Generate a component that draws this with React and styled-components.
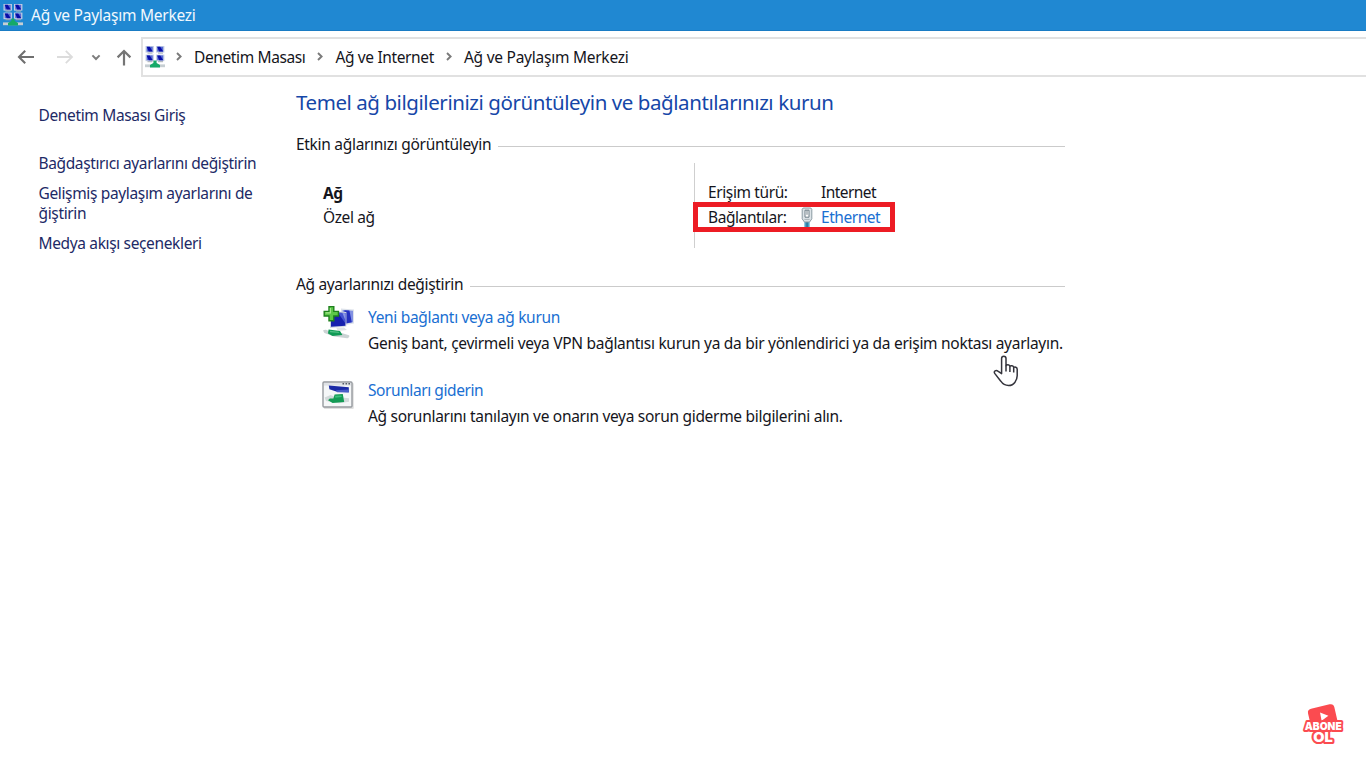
import React from 'react';
import styled, { createGlobalStyle } from 'styled-components';

const crumbs = [
    { label: 'Denetim Masası', tight: 0.38 },
    { label: 'Ağ ve Internet', tight: 0.37 },
    { label: 'Ağ ve Paylaşım Merkezi', tight: 0.25 },
];

const sideLinks = [
    { lines: ['Bağdaştırıcı ayarlarını değiştirin'], tight: 0.38 },
    { lines: ['Gelişmiş paylaşım ayarlarını de', 'ğiştirin'], tight: 0.35 },
    { lines: ['Medya akışı seçenekleri'], tight: 0.36 },
];

function NetworkIcon() {
    return (
        <svg width='20' height='22' viewBox='0 0 20 22'>
            {[[0.5, 0], [11, 0], [0.5, 8.6], [11, 8.6]].map(([x, y]) => (
                <g key={`${x}-${y}`} transform={`translate(${x} ${y})`}>
                    <rect width='8.4' height='6.6' fill='#c6d0e4' />
                    <rect x='1.2' y='0.8' width='6' height='4.8' fill='#5468d4' />
                    <path d='M1.2 0.8h3l3 4.8h-4z' fill='#070ca6' />
                    <rect x='2' y='6.6' width='5' height='1' fill='#a3abb5' />
                </g>
            ))}
            <rect y='18.4' width='20' height='2.8' fill='#c6ced2' />
            <path d='M8.4 14.6h3.2v2.4l3.4 2v2.4H5V19l3.4-2z' fill='#15a968' />
        </svg>
    );
}

function BackIcon() {
    return (
        <svg width='18' height='16' viewBox='0 0 18 16' fill='none' stroke='currentColor' strokeWidth='2.1'>
            <path d='M17 8H2M8.2 1.8L2 8l6.2 6.2' />
        </svg>
    );
}

function ForwardIcon() {
    return (
        <svg width='18' height='16' viewBox='0 0 18 16' fill='none' stroke='currentColor' strokeWidth='1.8'>
            <path d='M1 8h15M9.8 1.8L16 8l-6.2 6.2' />
        </svg>
    );
}

function DownIcon() {
    return (
        <svg width='10' height='7' viewBox='0 0 10 7' fill='none' stroke='currentColor' strokeWidth='2'>
            <path d='M1.4 1.4L5 5l3.6-3.6' />
        </svg>
    );
}

function UpIcon() {
    return (
        <svg width='16' height='17' viewBox='0 0 16 17' fill='none' stroke='currentColor' strokeWidth='2.2'>
            <path d='M8 16.5V2M1.6 8.4L8 2l6.4 6.4' />
        </svg>
    );
}

function CrumbArrow() {
    return (
        <svg width='6' height='9' viewBox='0 0 6 9' fill='none' stroke='#7a7a7a' strokeWidth='1.9'>
            <path d='M1 1l3.6 3.5L1 8' />
        </svg>
    );
}

function PlugIcon() {
    return (
        <svg width='12' height='20' viewBox='0 0 12 20'>
            <path d='M3.4 15h5.2v5H3.4z' fill='#4aa3c8' />
            <path d='M5.5 15h1.1v5H5.5z' fill='#1f6388' />
            <path d='M2.2 1h7.6l1 1.4v9.4L8.6 15H3.4L1.2 11.8V2.4z' fill='#dde4e8' stroke='#8b9aa3' />
            <path d='M4 3.2h4v7H4z' fill='#fff' stroke='#6f7f88' />
            <path d='M6 3.4v4.4' stroke='#6f7f88' />
            <path d='M3.4 12.4h5.2' stroke='#a9b4b9' />
        </svg>
    );
}

function NewConnectionIcon() {
    return (
        <svg width='34' height='36' viewBox='0 0 34 36'>
            <path d='M19 3.6l13 .8v14.2L19 21z' fill='#dde2ea' />
            <path d='M20.6 5l10.4.8v11.4l-10.4 2z' fill='#8190e2' />
            <path d='M22.4 5.2l5 .3 2.4 11.8-7.4 1.4z' fill='#2430bf' />
            <path d='M8 6l16.4 1V21.6L8 23z' fill='#d0d7e2' />
            <path d='M9 7.2l14.4.9v12.6L9 21.8z' fill='#1620ae' />
            <path d='M16 7.7l7.4.4v10.4z' fill='#4453d0' />
            <path d='M20.4 8l3 .2v7z' fill='#8b98e8' />
            <path d='M14 22.6h8l3 2.4-9 1z' fill='#dfe3e5' />
            <path d='M1 25.6c2-1.4 4-.6 5.6.6l11.4 1.4 9 2.6c1 1-.4 3-2 3L12 31.4 2.4 28z' fill='#cbd3d4' />
            <path d='M6.6 24.6l11.4 1.4 2.4 4-9.8 1L6 28.6z' fill='#109a55' />
            <path d='M8 25.8l8.4 1 1 1.2L8 27.2z' fill='#4fc084' />
            <path d='M7 1.6h4.8v4.8h4.6v4.6h-4.6v4.8H7V11H2.2V6.4H7z' fill='#5cc848' stroke='#1e801d' strokeWidth='1.4' />
            <path d='M8.4 3v4.8H3.6' fill='none' stroke='#a5e58c' strokeWidth='1.2' />
        </svg>
    );
}

function TroubleshootIcon() {
    return (
        <svg width='32' height='28' viewBox='0 0 32 28'>
            <rect x='1.8' y='2' width='30' height='26' rx='1' fill='#e0e0e0' />
            <rect x='1' y='1' width='29' height='25' rx='1' fill='#f5f7f8' stroke='#969a9f' strokeWidth='1.4' />
            <path d='M2 2h27v2.6H2z' fill='#dfe2e6' />
            <path d='M20.5 2.8h1.6M23.5 2.8h1.6M26.4 2.8H28' stroke='#555b66' strokeWidth='1.4' />
            <path d='M6.8 4.4l20 1.8v5L15 10.8 7.4 8.2z' fill='#1a2aa6' />
            <path d='M14 9.2l12.8-.8v3L15 11.2z' fill='#4a5cc8' />
            <path d='M2.6 16.5l6-2.4 4 1.6 14.4 1.6v3.4l-10 1.6L4 20z' fill='#d3dadb' />
            <path d='M20.8 13l1.4 8-11.6 1-4.6-2.8 1.8-1.6h3.6l1.2-4z' fill='#149b55' />
            <path d='M13 14.8l6.4-.4.4 1.6-6.4.8z' fill='#3cc07c' />
        </svg>
    );
}

function HandCursor() {
    return (
        <svg width='26' height='34' viewBox='0 0 26 34'>
            <path
                d='M8.6 19.6V4.6c0-3.2 4.4-3.2 4.4 0v7.2c.6-1.6 3.6-1.4 3.9.6.8-1.2 3.5-.9 3.8 1 1-.8 3.5-.4 3.5 1.8v6.6c0 2.6-1 4.4-2.2 6.4-1.4 2-3.6 3.3-6.4 3.3-3.8 0-6-1.6-7.8-4.3L1.7 19.4c-1.3-2.2 1.3-3.9 3.2-2.3z'
                fill='#fff'
                stroke='#34343c'
                strokeWidth='1.5'
                strokeLinejoin='round'
            />
            <path d='M13 11.6v6M16.9 12.6v5.4M20.7 13.6v4.8' stroke='#34343c' strokeWidth='1.5' fill='none' />
        </svg>
    );
}

function SubscribeLogo() {
    return (
        <svg width='44' height='46' viewBox='0 0 44 46' overflow='visible'>
            <rect x='7.6' y='3.2' width='27' height='24' rx='4' fill='#fb4b50' transform='rotate(-13 21 15.6)' />
            <path d='M18 9.4l8.4 3.4-6.8 5z' fill='#fff' />
            <LogoText x='21.2' y='27' textLength='37' fontSize='10.6'>ABONE</LogoText>
            <LogoText x='21' y='39.4' textLength='19.5' fontSize='13.6'>OL</LogoText>
        </svg>
    );
}

function App() {
    return (
        <Window>
            <GlobalStyle />
            <TitleBar>
                <NetworkIcon />
                <Label>Ağ ve Paylaşım Merkezi</Label>
            </TitleBar>
            <NavBar>
                <NavButtons>
                    <NavButton $color='#6f6f6f' $gap='21px'><BackIcon /></NavButton>
                    <NavButton $color='#dcdcdc' $gap='17px'><ForwardIcon /></NavButton>
                    <NavButton $color='#7d7d7d' $gap='15px'><DownIcon /></NavButton>
                    <NavButton $color='#757575' $gap='0'><UpIcon /></NavButton>
                </NavButtons>
                <AddressBar>
                    <NetworkIcon />
                    {crumbs.map((c) => (
                        <Crumb key={c.label}>
                            <CrumbArrow />
                            <Label $tight={c.tight}>{c.label}</Label>
                        </Crumb>
                    ))}
                </AddressBar>
            </NavBar>
            <Body>
                <Sidebar>
                    <SideHome>Denetim Masası Giriş</SideHome>
                    {sideLinks.map((l) => (
                        <SideLink key={l.lines[0]} $tight={l.tight}>
                            {l.lines.map((line) => <div key={line}>{line}</div>)}
                        </SideLink>
                    ))}
                </Sidebar>
                <Main>
                    <Heading>Temel ağ bilgilerinizi görüntüleyin ve bağlantılarınızı kurun</Heading>
                    <GroupTitle $tight={0.3}>Etkin ağlarınızı görüntüleyin</GroupTitle>
                    <ActiveNetwork>
                        <NetworkName>
                            <strong>Ağ</strong>
                            <Label $tight={0.4}>Özel ağ</Label>
                        </NetworkName>
                        <Details>
                            <DetailRow>
                                <Label $tight={0.39}>Erişim türü:</Label>
                                <Label $tight={0.55}>Internet</Label>
                            </DetailRow>
                            <DetailRow>
                                <Label $tight={0.42}>Bağlantılar:</Label>
                                <TaskLink href='#' $tight={0.45}>Ethernet</TaskLink>
                                <PlugSlot><PlugIcon /></PlugSlot>
                                <Highlight />
                            </DetailRow>
                        </Details>
                    </ActiveNetwork>
                    <GroupTitle $tight={0.34}>Ağ ayarlarınızı değiştirin</GroupTitle>
                    <Task>
                        <TaskIcon $top='1px'><NewConnectionIcon /></TaskIcon>
                        <TaskText>
                            <TaskLink href='#' $tight={0.32}>Yeni bağlantı veya ağ kurun</TaskLink>
                            <Label $tight={0.29}>Geniş bant, çevirmeli veya VPN bağlantısı kurun ya da bir yönlendirici ya da erişim noktası ayarlayın.</Label>
                        </TaskText>
                    </Task>
                    <Task>
                        <TaskIcon $top='4px'><TroubleshootIcon /></TaskIcon>
                        <TaskText>
                            <TaskLink href='#' $tight={0.42}>Sorunları giderin</TaskLink>
                            <Label $tight={0.3}>Ağ sorunlarını tanılayın ve onarın veya sorun giderme bilgilerini alın.</Label>
                        </TaskText>
                    </Task>
                </Main>
            </Body>
            <CursorLayer><HandCursor /></CursorLayer>
            <LogoLayer><SubscribeLogo /></LogoLayer>
        </Window>
    );
}

const GlobalStyle = createGlobalStyle`
body {
    margin: 0;
    background: #fff;
    font-family: 'Noto Sans', 'Liberation Sans', sans-serif;
    font-size: 15.5px;
    line-height: 20px;
    color: #15151c;
}
svg {
    display: block;
    flex-shrink: 0;
}
`;

const Window = styled.div`
position: relative;
height: 768px;
overflow: hidden;
`;

const Label = styled.span`
white-space: nowrap;
letter-spacing: ${(p) => -(p.$tight ?? 0.25)}px;
`;

const TitleBar = styled.header`
box-sizing: border-box;
display: flex;
align-items: center;
gap: 8px;
height: 31px;
padding: 0 0 1px 3px;
background: #2088d2;
color: #f2f8fd;
border-bottom: 1px solid #1a7cc4;
`;

const NavBar = styled.nav`
display: flex;
align-items: flex-start;
height: 46px;
padding-top: 6px;
box-sizing: border-box;
`;

const NavButtons = styled.div`
display: flex;
align-items: center;
width: 141px;
height: 40px;
padding-left: 17px;
box-sizing: border-box;
`;

const NavButton = styled.span`
color: ${(p) => p.$color};
margin-right: ${(p) => p.$gap};
`;

const AddressBar = styled.div`
box-sizing: border-box;
display: flex;
align-items: center;
flex: 1;
height: 40px;
padding: 0 0 1px 2px;
border: 2px solid #e1e1e1;
border-right: none;
`;

const Crumb = styled.div`
display: flex;
align-items: center;
gap: 12px;
margin-left: 12px;

&:nth-child(2) {
    margin-left: 11px;
}
`;

const Body = styled.div`
display: grid;
grid-template-columns: 257px 769px;
column-gap: 39px;
`;

const Sidebar = styled.aside`
display: flex;
flex-direction: column;
gap: 10px;
padding: 28px 0 0 38.5px;
color: #1d2a66;
`;

const SideHome = styled.div`
margin-bottom: 18px;
letter-spacing: -0.35px;
`;

const SideLink = styled.div`
white-space: nowrap;
letter-spacing: ${(p) => -p.$tight}px;
`;

const Main = styled.main`
display: flex;
flex-direction: column;
`;

const Heading = styled.h1`
margin: 11px 0 18px;
font-size: 20.5px;
font-weight: 400;
line-height: 28px;
letter-spacing: -0.43px;
white-space: nowrap;
color: #1647a8;
`;

const GroupTitle = styled.div`
display: flex;
align-items: center;
gap: 7px;
height: 20px;
white-space: nowrap;
letter-spacing: ${(p) => -p.$tight}px;

&::after {
    content: '';
    flex: 1;
    height: 1px;
    margin-top: 4px;
    background: #cbcbcb;
}
`;

const ActiveNetwork = styled.div`
display: grid;
grid-template-columns: 371px 1fr;
height: 85px;
margin: 9px 0 26px 27px;
`;

const NetworkName = styled.div`
display: flex;
flex-direction: column;
gap: 4px;
padding-top: 20px;

strong {
    letter-spacing: -0.4px;
}
`;

const Details = styled.div`
display: flex;
flex-direction: column;
gap: 5px;
padding: 19px 0 0 13px;
border-left: 1px solid #cfcfcf;
`;

const DetailRow = styled.div`
position: relative;
display: grid;
grid-template-columns: 113px 1fr;
`;

const PlugSlot = styled.div`
position: absolute;
left: 93px;
top: 0;
`;

const Highlight = styled.div`
position: absolute;
left: -15px;
top: -5px;
width: 202px;
height: 30px;
box-sizing: border-box;
border: 5px solid #ed1c24;
`;

const TaskLink = styled.a`
color: #1a6fd2;
text-decoration: none;
white-space: nowrap;
letter-spacing: ${(p) => -p.$tight}px;
`;

const Task = styled.div`
display: grid;
grid-template-columns: 46px 1fr;
height: 60px;
padding: 10px 0 3px 26px;
`;

const TaskIcon = styled.div`
margin-top: ${(p) => p.$top};
`;

const TaskText = styled.div`
display: flex;
flex-direction: column;
gap: 6px;
margin-top: 3px;
`;

const CursorLayer = styled.div`
position: absolute;
left: 993px;
top: 354px;
`;

const LogoLayer = styled.div`
position: absolute;
left: 1302px;
top: 703px;
`;

const LogoText = styled.text.attrs({
    textAnchor: 'middle',
    lengthAdjust: 'spacingAndGlyphs',
})`
font-family: Inter, sans-serif;
font-weight: 900;
letter-spacing: 0;
fill: #fff;
stroke: #fb4b50;
stroke-width: 4px;
stroke-linejoin: round;
paint-order: stroke;
`;

export default App;
